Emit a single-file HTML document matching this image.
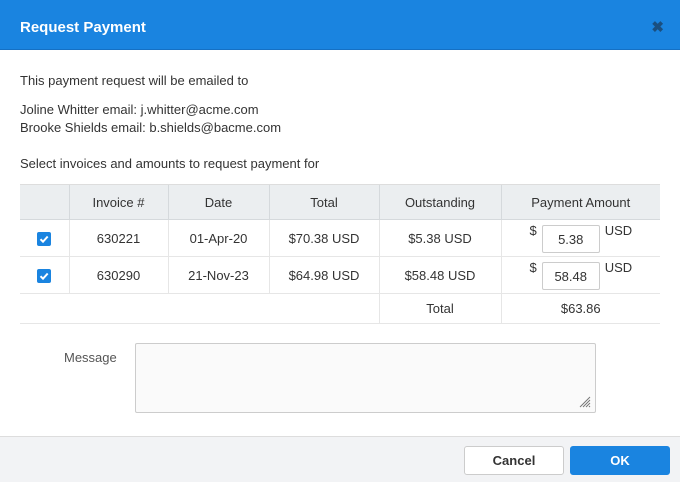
<!DOCTYPE html>
<html><head><meta charset="utf-8"><style>
*{box-sizing:border-box;margin:0;padding:0}
body{width:680px;height:482px;overflow:hidden;font-family:"Liberation Sans",sans-serif;font-size:13px;color:#333;background:#fff;position:relative}
.hdr{position:absolute;left:0;top:0;width:680px;height:50px;background:#1a84e0;border-bottom:1px solid #1570c4}
.hdr h1{position:absolute;left:20px;top:19px;font-size:15px;font-weight:bold;color:#fff}
.x{position:absolute;right:16px;top:18px;color:#1a4f80;font-size:15px;font-weight:bold}
.t{position:absolute;left:20px;white-space:nowrap}
table{position:absolute;left:20px;top:184px;width:640px;border-collapse:collapse;table-layout:fixed}
td,th{text-align:center;font-weight:normal;border-left:1px solid #e6e6e6;border-bottom:1px solid #e6e6e6;padding:0}
tr>*:first-child{border-left:none}
th{background:#ebeef0;height:35px;border-top:1px solid #ddd;border-bottom:1px solid #d5d9dc;border-left-color:#d5d9dc}
td{height:37px}
.cb{display:inline-block;width:14px;height:14px;background:#1a84e0;border-radius:2px;vertical-align:middle;position:relative}
.inp{display:inline-block;width:58px;height:28px;border:1px solid #ccc;border-radius:2px;line-height:27px;text-align:center;font-size:13px;margin:0 5px 0 5px;vertical-align:middle}
.pa{text-align:left;padding-left:28px}
.pa span.s{vertical-align:8px}
.pa span.u{vertical-align:8px}
.msg{position:absolute;left:135px;top:343px;width:461px;height:70px;border:1px solid #ccc;background:#fafafa;border-radius:2px}
.ft{position:absolute;left:0;top:436px;width:680px;height:46px;background:#f2f3f5;border-top:1px solid #ddd}
.btn{position:absolute;top:9px;height:29px;border-radius:3px;text-align:center;line-height:27px;font-weight:bold;font-size:13px}
</style></head><body>
<div class="hdr"><h1>Request Payment</h1><div class="x">✖</div></div>
<div class="t" style="top:73px">This payment request will be emailed to</div>
<div class="t" style="top:102px">Joline Whitter email: j.whitter@acme.com</div>
<div class="t" style="top:120px">Brooke Shields email: b.shields@bacme.com</div>
<div class="t" style="top:156px">Select invoices and amounts to request payment for</div>
<table>
<colgroup><col style="width:49px"><col style="width:99px"><col style="width:101px"><col style="width:110px"><col style="width:122px"><col style="width:159px"></colgroup>
<tr><th></th><th>Invoice #</th><th>Date</th><th>Total</th><th>Outstanding</th><th>Payment Amount</th></tr>
<tr><td><span class="cb"><svg width="14" height="14" style="position:absolute;left:0;top:0"><path d="M3.5 7.2L6 9.7L10.7 4.5" stroke="#fff" stroke-width="2" fill="none"/></svg></span></td><td>630221</td><td>01-Apr-20</td><td>$70.38 USD</td><td>$5.38 USD</td><td class="pa"><span class="s">$</span><span class="inp">5.38</span><span class="u">USD</span></td></tr>
<tr><td><span class="cb"><svg width="14" height="14" style="position:absolute;left:0;top:0"><path d="M3.5 7.2L6 9.7L10.7 4.5" stroke="#fff" stroke-width="2" fill="none"/></svg></span></td><td>630290</td><td>21-Nov-23</td><td>$64.98 USD</td><td>$58.48 USD</td><td class="pa"><span class="s">$</span><span class="inp">58.48</span><span class="u">USD</span></td></tr>
<tr style="height:30px"><td style="height:30px"></td><td style="border-left:none;height:30px"></td><td style="border-left:none;height:30px"></td><td style="border-left:none;height:30px"></td><td style="height:30px">Total</td><td style="height:30px">$63.86</td></tr>
</table>
<div class="t" style="left:64px;top:350px;color:#555">Message</div>
<div class="msg"><svg width="12" height="12" style="position:absolute;right:4px;bottom:4px"><path d="M11 1L1 11M11 4L4 11M11 7L7 11M11 10L10 11" stroke="#777" stroke-width="1"/></svg></div>
<div class="ft">
<div class="btn" style="left:464px;width:100px;background:#fff;border:1px solid #ccc;color:#333">Cancel</div>
<div class="btn" style="left:570px;width:100px;background:#1a84e0;color:#fff;border:1px solid #1a84e0">OK</div>
</div>
</body></html>
